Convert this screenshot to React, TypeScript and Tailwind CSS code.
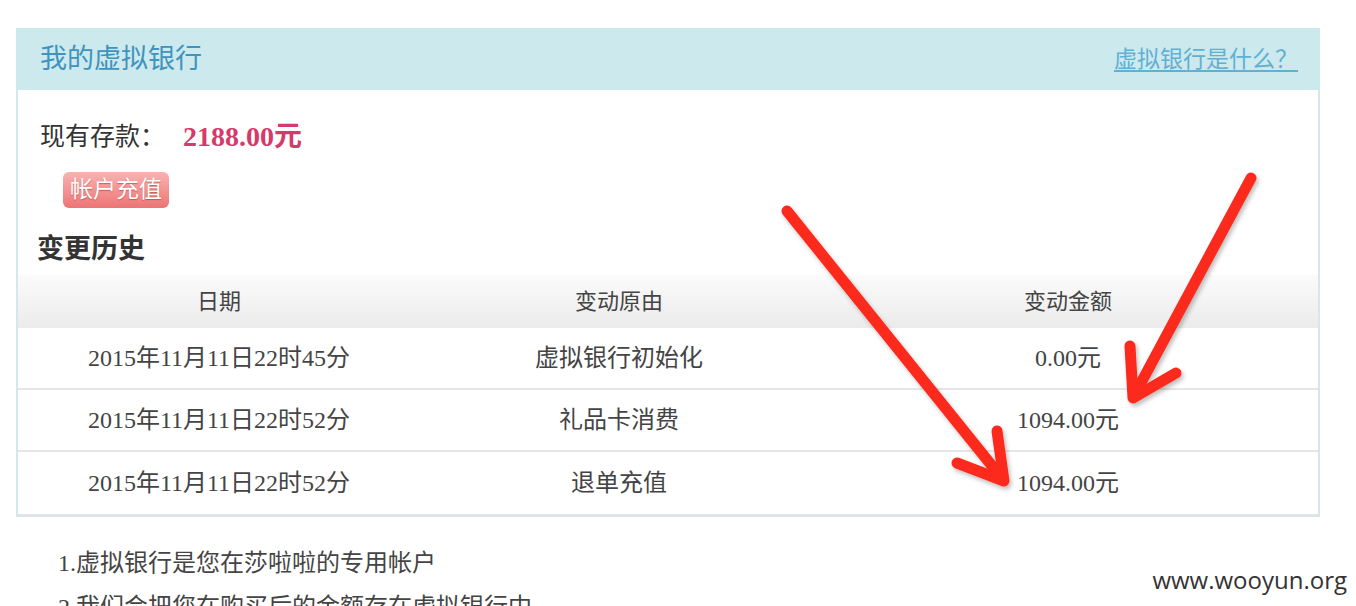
import React from "react";

const rows = [
  { date: "2015年11月11日22时45分", reason: "虚拟银行初始化", amount: "0.00元" },
  { date: "2015年11月11日22时52分", reason: "礼品卡消费", amount: "1094.00元" },
  { date: "2015年11月11日22时52分", reason: "退单充值", amount: "1094.00元" },
];

const serif = { fontFamily: '"Liberation Serif", "Noto Sans CJK SC", serif' };

function Arrows() {
  return (
    <svg className="pointer-events-none absolute left-0 top-0" width="1356" height="606">
      <defs>
        <filter id="sh" x="-10%" y="-10%" width="130%" height="130%">
          <feDropShadow dx="2" dy="3" stdDeviation="2" floodColor="#000" floodOpacity="0.25" />
        </filter>
      </defs>
      <g stroke="#fb2a1f" strokeWidth="11" strokeLinecap="round" strokeLinejoin="round" fill="none" filter="url(#sh)">
        <line x1="787" y1="211" x2="1001" y2="477" />
        <polyline points="997,431 1004,481 957,463" />
        <line x1="1251" y1="178" x2="1135" y2="394" />
        <polyline points="1130,346 1133,398 1176,373" />
      </g>
    </svg>
  );
}

export default function App() {
  return (
    <div className="relative h-[606px] w-[1356px] overflow-hidden bg-white" style={serif}>
      <div className="pt-[28px] pl-[16px]">
        <div className="w-[1304px] border-x-2 border-b-[3px] border-x-[#d3e7ec] border-b-[#dde5e8]">
          <div className="-mx-[2px] flex h-[62px] items-center justify-between bg-[#cce9ed] pl-[24px] pr-[22px]">
            <span className="text-[27px] text-[#3f94bd]">我的虚拟银行</span>
            <a className="pt-[2px] text-[23px] text-[#5fb0d4] underline underline-offset-[3px]">虚拟银行是什么？</a>
          </div>

          <div className="pt-[27px]">
            <div className="flex h-[40px] items-center pl-[22px] text-[25px] text-[#333]">
              <span>现有存款：</span>
              <span className="ml-[18px] text-[28px] font-bold text-[#d63a6a]">2188.00元</span>
            </div>
            <div className="pl-[45px] pt-[15px]">
              <div className="flex h-[36px] w-[106px] items-center justify-center rounded-md bg-gradient-to-b from-[#f8b2b2] to-[#ec7474] text-[23px] text-white [text-shadow:0_1px_1px_rgba(150,40,40,0.5)]">
                帐户充值
              </div>
            </div>
            <div className="mt-[23px] flex h-[36px] items-center pl-[19px] text-[27px] font-bold text-[#333]">
              变更历史
            </div>

            <div className="mt-[8px] grid h-[53px] grid-cols-[402px_398px_1fr] items-center bg-gradient-to-b from-[#fbfbfb] to-[#ebebeb] text-[22px] text-[#444]">
              <div className="text-center">日期</div>
              <div className="text-center">变动原由</div>
              <div className="text-center">变动金额</div>
            </div>
            {rows.map((r, i) => (
              <div
                key={i}
                className={`grid h-[62px] grid-cols-[402px_398px_1fr] items-center text-[24px] text-[#444] ${
                  i < rows.length - 1 ? "border-b-2 border-[#e6e6e6]" : ""
                }`}
              >
                <div className="text-center">{r.date}</div>
                <div className="text-center">{r.reason}</div>
                <div className="text-center">{r.amount}</div>
              </div>
            ))}
          </div>
        </div>

        <div className="pl-[42px] pt-[24px] text-[24px] leading-[44px] text-[#444]">
          <div>1.虚拟银行是您在莎啦啦的专用帐户</div>
          <div>2.我们会把您在购买后的金额存在虚拟银行中</div>
        </div>
      </div>

      <div
        className="absolute right-[9px] top-[562px] text-[24px] text-[#333]"
        style={{ fontFamily: '"Open Sans", "Noto Sans", sans-serif' }}
      >
        www.wooyun.org
      </div>

      <Arrows />
    </div>
  );
}
